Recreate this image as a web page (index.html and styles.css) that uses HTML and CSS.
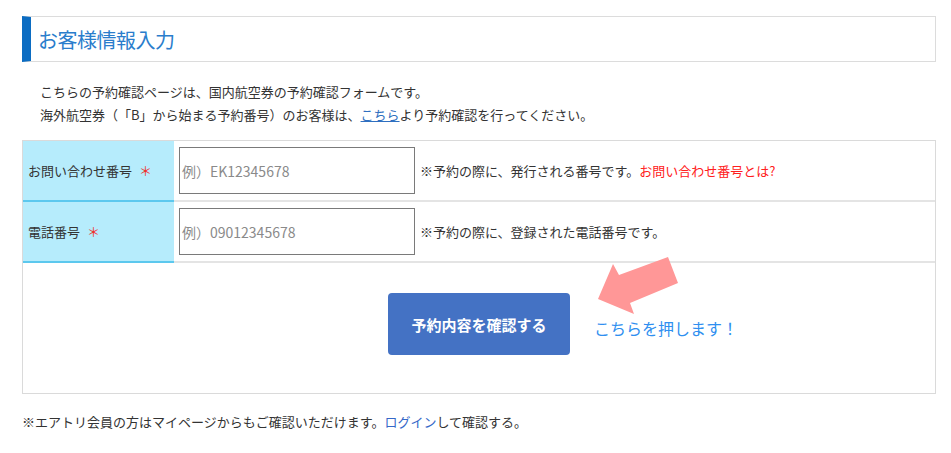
FILE: index.html
```html
<!DOCTYPE html>
<html lang="ja">
<head>
<meta charset="utf-8">
<link rel="stylesheet" href="styles.css">
</head>
<body>
<div class="page">
  <h2 class="heading">お客様情報入力</h2>
  <p class="intro">こちらの予約確認ページは、国内航空券の予約確認フォームです。<br>海外航空券（「B」から始まる予約番号）のお客様は、<a class="ul-link" href="#">こちら</a>より予約確認を行ってください。</p>
  <div class="form">
    <div class="label">お問い合わせ番号<span class="req">＊</span></div>
    <div class="field">
      <div class="input">例）EK12345678</div>
      <span class="note">※予約の際に、発行される番号です。<a class="red" href="#">お問い合わせ番号とは?</a></span>
    </div>
    <div class="label">電話番号<span class="req">＊</span></div>
    <div class="field">
      <div class="input">例）09012345678</div>
      <span class="note">※予約の際に、登録された電話番号です。</span>
    </div>
    <div class="submit">
      <button class="btn">予約内容を確認する</button>
      <div class="callout">
        <svg class="arrow" width="90" height="62" viewBox="0 0 90 62"><polygon points="70,0 80,26 32,46 36,57 0,42 15,7 21,18" fill="#ff9797"/></svg>
        <span class="callout-text">こちらを押します！</span>
      </div>
    </div>
  </div>
  <p class="footer">※エアトリ会員の方はマイページからもご確認いただけます。<a class="blue" href="#">ログイン</a>して確認する。</p>
</div>
</body>
</html>
```

FILE: styles.css
```css
html, body {
  margin: 0;
  padding: 0;
  background: #fff;
}
body {
  font-family: "Noto Sans CJK JP", "Noto Sans", sans-serif;
  color: #333;
  font-size: 13px;
  text-spacing-trim: space-all;
}
.page {
  padding: 16px 15px 0 22px;
}
.heading {
  margin: 0;
  height: 44px;
  display: flex;
  align-items: center;
  border: 1px solid #dcdcdc;
  border-left: 9px solid #0b6cc2;
  padding-left: 7px;
  font-size: 20px;
  font-weight: normal;
  color: #2a7dcc;
  letter-spacing: -0.5px;
}
.intro {
  margin: 18px 0 0 18px;
  line-height: 23px;
  font-size: 13px;
  color: #333;
}
.ul-link {
  color: #2f6fc0;
  text-decoration: underline;
}
.form {
  margin-top: 14px;
  border: 1px solid #dadada;
  display: grid;
  grid-template-columns: 151px 1fr;
  grid-template-rows: 61px 61px 130px;
}
.label {
  background: #b6ecfc;
  border-bottom: 2px solid #5cc8ee;
  display: flex;
  align-items: center;
  padding-left: 5px;
  font-size: 13px;
  color: #333;
}
.req {
  color: #f0302a;
  margin-left: 7px;
  font-size: 13px;
}
.field {
  border-bottom: 2px solid #e4e4e4;
  display: flex;
  align-items: center;
  padding-left: 5px;
}
.input {
  box-sizing: border-box;
  width: 236px;
  height: 47px;
  border: 1px solid #7a7a7a;
  display: flex;
  align-items: center;
  padding-left: 2px;
  color: #8a8a8a;
  font-size: 14px;
}
.note {
  margin-left: 5px;
  font-size: 13px;
  color: #333;
}
.red {
  color: #ff2020;
  text-decoration: none;
}
.blue {
  color: #3568c8;
  text-decoration: none;
}
.submit {
  grid-column: 1 / 3;
  position: relative;
  display: flex;
  justify-content: center;
  align-items: flex-start;
  padding-top: 30px;
}
.btn {
  width: 182px;
  height: 62px;
  border: none;
  border-radius: 4px;
  background: #4472c4;
  color: #fff;
  font-family: "Noto Sans CJK JP", sans-serif;
  font-size: 15px;
  font-weight: bold;
}
.callout {
  position: absolute;
  left: 574px;
  top: -7px;
  width: 200px;
  height: 90px;
}
.arrow {
  position: absolute;
  left: 1px;
  top: 1px;
}
.callout-text {
  position: absolute;
  left: -3px;
  top: 60px;
  font-size: 16px;
  color: #2f8ff0;
  white-space: nowrap;
}
.footer {
  margin: 18px 0 0 0;
  font-size: 13px;
  color: #333;
}
```
